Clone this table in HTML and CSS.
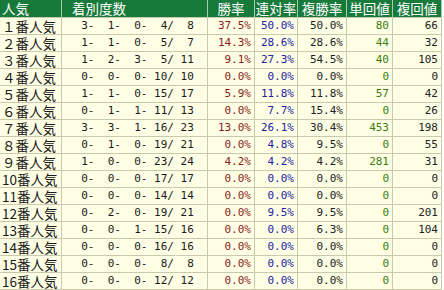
FILE: index.html
```html
<!DOCTYPE html>
<html lang="ja">
<head>
<meta charset="utf-8">
<link rel="stylesheet" href="styles.css">
</head>
<body>
<table class="stats">
<colgroup><col class="c-pop"><col class="c-res"><col class="c-win"><col class="c-ren"><col class="c-fuku"><col class="c-tan"><col class="c-fk"></colgroup>
<thead>
<tr><th class="h-pop">人気</th><th class="h-res">着別度数</th><th>勝率</th><th>連対率</th><th>複勝率</th><th>単回値</th><th>複回値</th></tr>
</thead>
<tbody>
<tr><td class="pop">１番人気</td><td class="res">  3-  1-  0-  4/  8</td><td class="win">37.5%</td><td class="ren">50.0%</td><td class="fuku">50.0%</td><td class="tan">80</td><td class="fk">66</td></tr>
<tr><td class="pop">２番人気</td><td class="res">  1-  1-  0-  5/  7</td><td class="win">14.3%</td><td class="ren">28.6%</td><td class="fuku">28.6%</td><td class="tan">44</td><td class="fk">32</td></tr>
<tr><td class="pop">３番人気</td><td class="res">  1-  2-  3-  5/ 11</td><td class="win">9.1%</td><td class="ren">27.3%</td><td class="fuku">54.5%</td><td class="tan">40</td><td class="fk">105</td></tr>
<tr><td class="pop">４番人気</td><td class="res">  0-  0-  0- 10/ 10</td><td class="win">0.0%</td><td class="ren">0.0%</td><td class="fuku">0.0%</td><td class="tan">0</td><td class="fk">0</td></tr>
<tr><td class="pop">５番人気</td><td class="res">  1-  1-  0- 15/ 17</td><td class="win">5.9%</td><td class="ren">11.8%</td><td class="fuku">11.8%</td><td class="tan">57</td><td class="fk">42</td></tr>
<tr><td class="pop">６番人気</td><td class="res">  0-  1-  1- 11/ 13</td><td class="win">0.0%</td><td class="ren">7.7%</td><td class="fuku">15.4%</td><td class="tan">0</td><td class="fk">26</td></tr>
<tr><td class="pop">７番人気</td><td class="res">  3-  3-  1- 16/ 23</td><td class="win">13.0%</td><td class="ren">26.1%</td><td class="fuku">30.4%</td><td class="tan">453</td><td class="fk">198</td></tr>
<tr><td class="pop">８番人気</td><td class="res">  0-  1-  0- 19/ 21</td><td class="win">0.0%</td><td class="ren">4.8%</td><td class="fuku">9.5%</td><td class="tan">0</td><td class="fk">55</td></tr>
<tr><td class="pop">９番人気</td><td class="res">  1-  0-  0- 23/ 24</td><td class="win">4.2%</td><td class="ren">4.2%</td><td class="fuku">4.2%</td><td class="tan">281</td><td class="fk">31</td></tr>
<tr><td class="pop">10番人気</td><td class="res">  0-  0-  0- 17/ 17</td><td class="win">0.0%</td><td class="ren">0.0%</td><td class="fuku">0.0%</td><td class="tan">0</td><td class="fk">0</td></tr>
<tr><td class="pop">11番人気</td><td class="res">  0-  0-  0- 14/ 14</td><td class="win">0.0%</td><td class="ren">0.0%</td><td class="fuku">0.0%</td><td class="tan">0</td><td class="fk">0</td></tr>
<tr><td class="pop">12番人気</td><td class="res">  0-  2-  0- 19/ 21</td><td class="win">0.0%</td><td class="ren">9.5%</td><td class="fuku">9.5%</td><td class="tan">0</td><td class="fk">201</td></tr>
<tr><td class="pop">13番人気</td><td class="res">  0-  0-  1- 15/ 16</td><td class="win">0.0%</td><td class="ren">0.0%</td><td class="fuku">6.3%</td><td class="tan">0</td><td class="fk">104</td></tr>
<tr><td class="pop">14番人気</td><td class="res">  0-  0-  0- 16/ 16</td><td class="win">0.0%</td><td class="ren">0.0%</td><td class="fuku">0.0%</td><td class="tan">0</td><td class="fk">0</td></tr>
<tr><td class="pop">15番人気</td><td class="res">  0-  0-  0-  8/  8</td><td class="win">0.0%</td><td class="ren">0.0%</td><td class="fuku">0.0%</td><td class="tan">0</td><td class="fk">0</td></tr>
<tr><td class="pop">16番人気</td><td class="res">  0-  0-  0- 12/ 12</td><td class="win">0.0%</td><td class="ren">0.0%</td><td class="fuku">0.0%</td><td class="tan">0</td><td class="fk">0</td></tr>
</tbody>
</table>
</body>
</html>
```
FILE: styles.css
```css
html, body {
  margin: 0;
  padding: 0;
  background: #ffffff;
}

.stats {
  border-collapse: separate;
  border-spacing: 0;
  table-layout: fixed;
  width: 442px;
}

.c-pop { width: 62px; }
.c-res { width: 146px; }
.c-win { width: 47px; }
.c-ren { width: 43px; }
.c-fuku { width: 49px; }
.c-tan { width: 46px; }
.c-fk { width: 49px; }

.stats th,
.stats td {
  box-sizing: border-box;
  padding: 0;
  border-right: 1px solid #c9c9ad;
  border-bottom: 1px solid #c9c9ad;
  white-space: pre;
}

.stats th {
  height: 18px;
  background: #17793a;
  color: #ffffff;
  font-family: "Noto Sans CJK JP", sans-serif;
  font-size: 13.5px;
  font-weight: normal;
  line-height: 17px;
  text-align: center;
  border-right-color: #a9cdb2;
}

.stats th.h-pop {
  text-align: left;
  padding-left: 2px;
}

.stats th.h-res {
  text-align: left;
  padding-left: 10px;
}

.stats td {
  height: 17px;
  background: #ffffe6;
  color: #1a1a1a;
  font-family: "DejaVu Sans Mono", monospace;
  font-size: 11px;
  line-height: 16px;
  text-align: right;
  padding-right: 3px;
}

.stats td.pop {
  font-family: "Noto Sans CJK JP", sans-serif;
  font-size: 13.5px;
  text-align: left;
  padding-left: 2px;
  padding-right: 0;
}

.stats td.res {
  text-align: left;
  padding-left: 6px;
}

.stats td.win { color: #8e1b1b; }
.stats td.ren { color: #2323a3; }
.stats td.fuku { color: #222222; }
.stats td.tan { color: #3b7d0c; }
.stats td.fk { color: #222222; }
```
